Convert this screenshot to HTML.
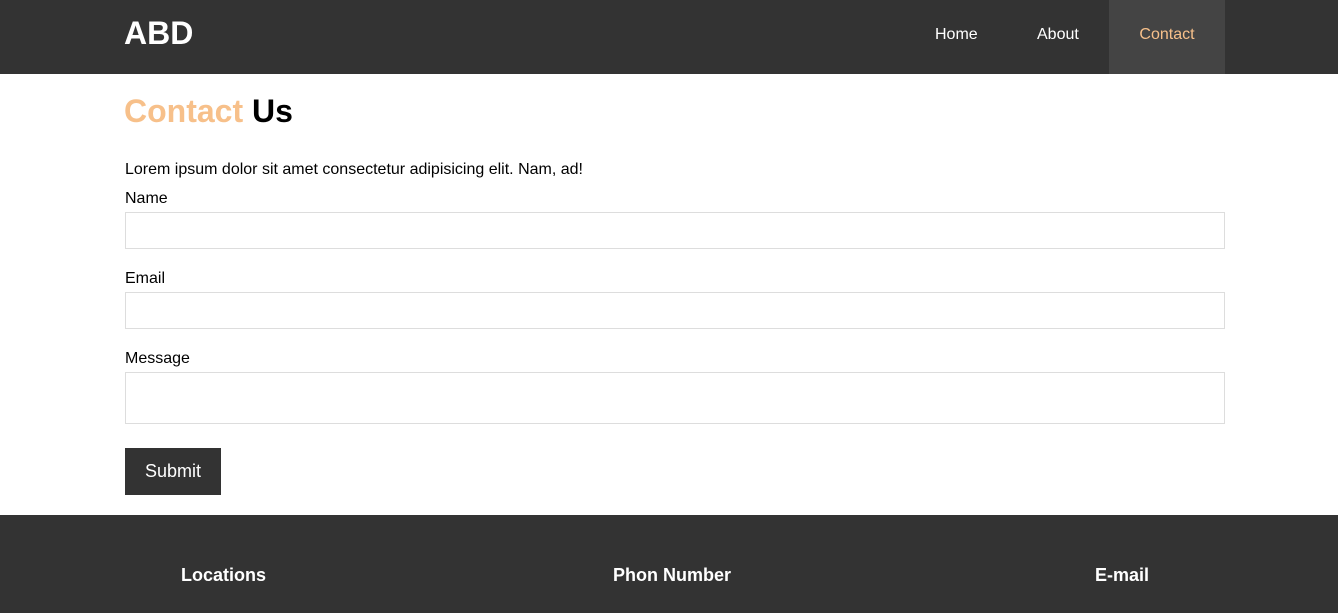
<!DOCTYPE html>
<html><head><style>
*{margin:0;padding:0;box-sizing:border-box}
body{width:1338px;height:613px;overflow:hidden;font-family:"Liberation Sans",Arial,sans-serif;background:#fff;position:relative}
header{position:absolute;left:0;top:0;width:1338px;height:74px;background:#333}
.logo{position:absolute;left:124px;top:15px;color:#fff;font-size:32px;font-weight:bold}
.nav a{position:absolute;top:0;height:74px;line-height:69px;color:#fff;font-size:16px;text-decoration:none}
.nav .act{background:#444;color:#f7c08a;left:1109px;width:116px;text-align:center}
h1{position:absolute;left:124px;top:93px;font-size:32px;font-weight:bold;color:#000}
h1 span{color:#f7c08a}
.t{position:absolute;left:125px;font-size:16px;color:#000}
.in{position:absolute;left:125px;width:1100px;border:1px solid #ddd;background:#fff}
.btn{position:absolute;left:125px;top:448px;width:96px;height:47px;background:#333;color:#fff;font-size:18px;text-align:center;line-height:46px}
footer{position:absolute;left:0;top:515px;width:1338px;height:98px;background:#333}
footer div{position:absolute;top:50px;color:#fff;font-size:18px;font-weight:bold}
</style></head><body>
<header><div class="logo">ABD</div>
<div class="nav"><a style="left:935px">Home</a><a style="left:1037px">About</a><a class="act">Contact</a></div></header>
<h1><span>Contact</span> Us</h1>
<div class="t" style="top:161px">Lorem ipsum dolor sit amet consectetur adipisicing elit. Nam, ad!</div>
<div class="t" style="top:190px">Name</div>
<div class="in" style="top:212px;height:37px"></div>
<div class="t" style="top:270px">Email</div>
<div class="in" style="top:292px;height:37px"></div>
<div class="t" style="top:350px">Message</div>
<div class="in" style="top:372px;height:52px"></div>
<div class="btn">Submit</div>
<footer><div style="left:181px">Locations</div><div style="left:613px">Phon Number</div><div style="left:1095px">E-mail</div></footer>
</body></html>
